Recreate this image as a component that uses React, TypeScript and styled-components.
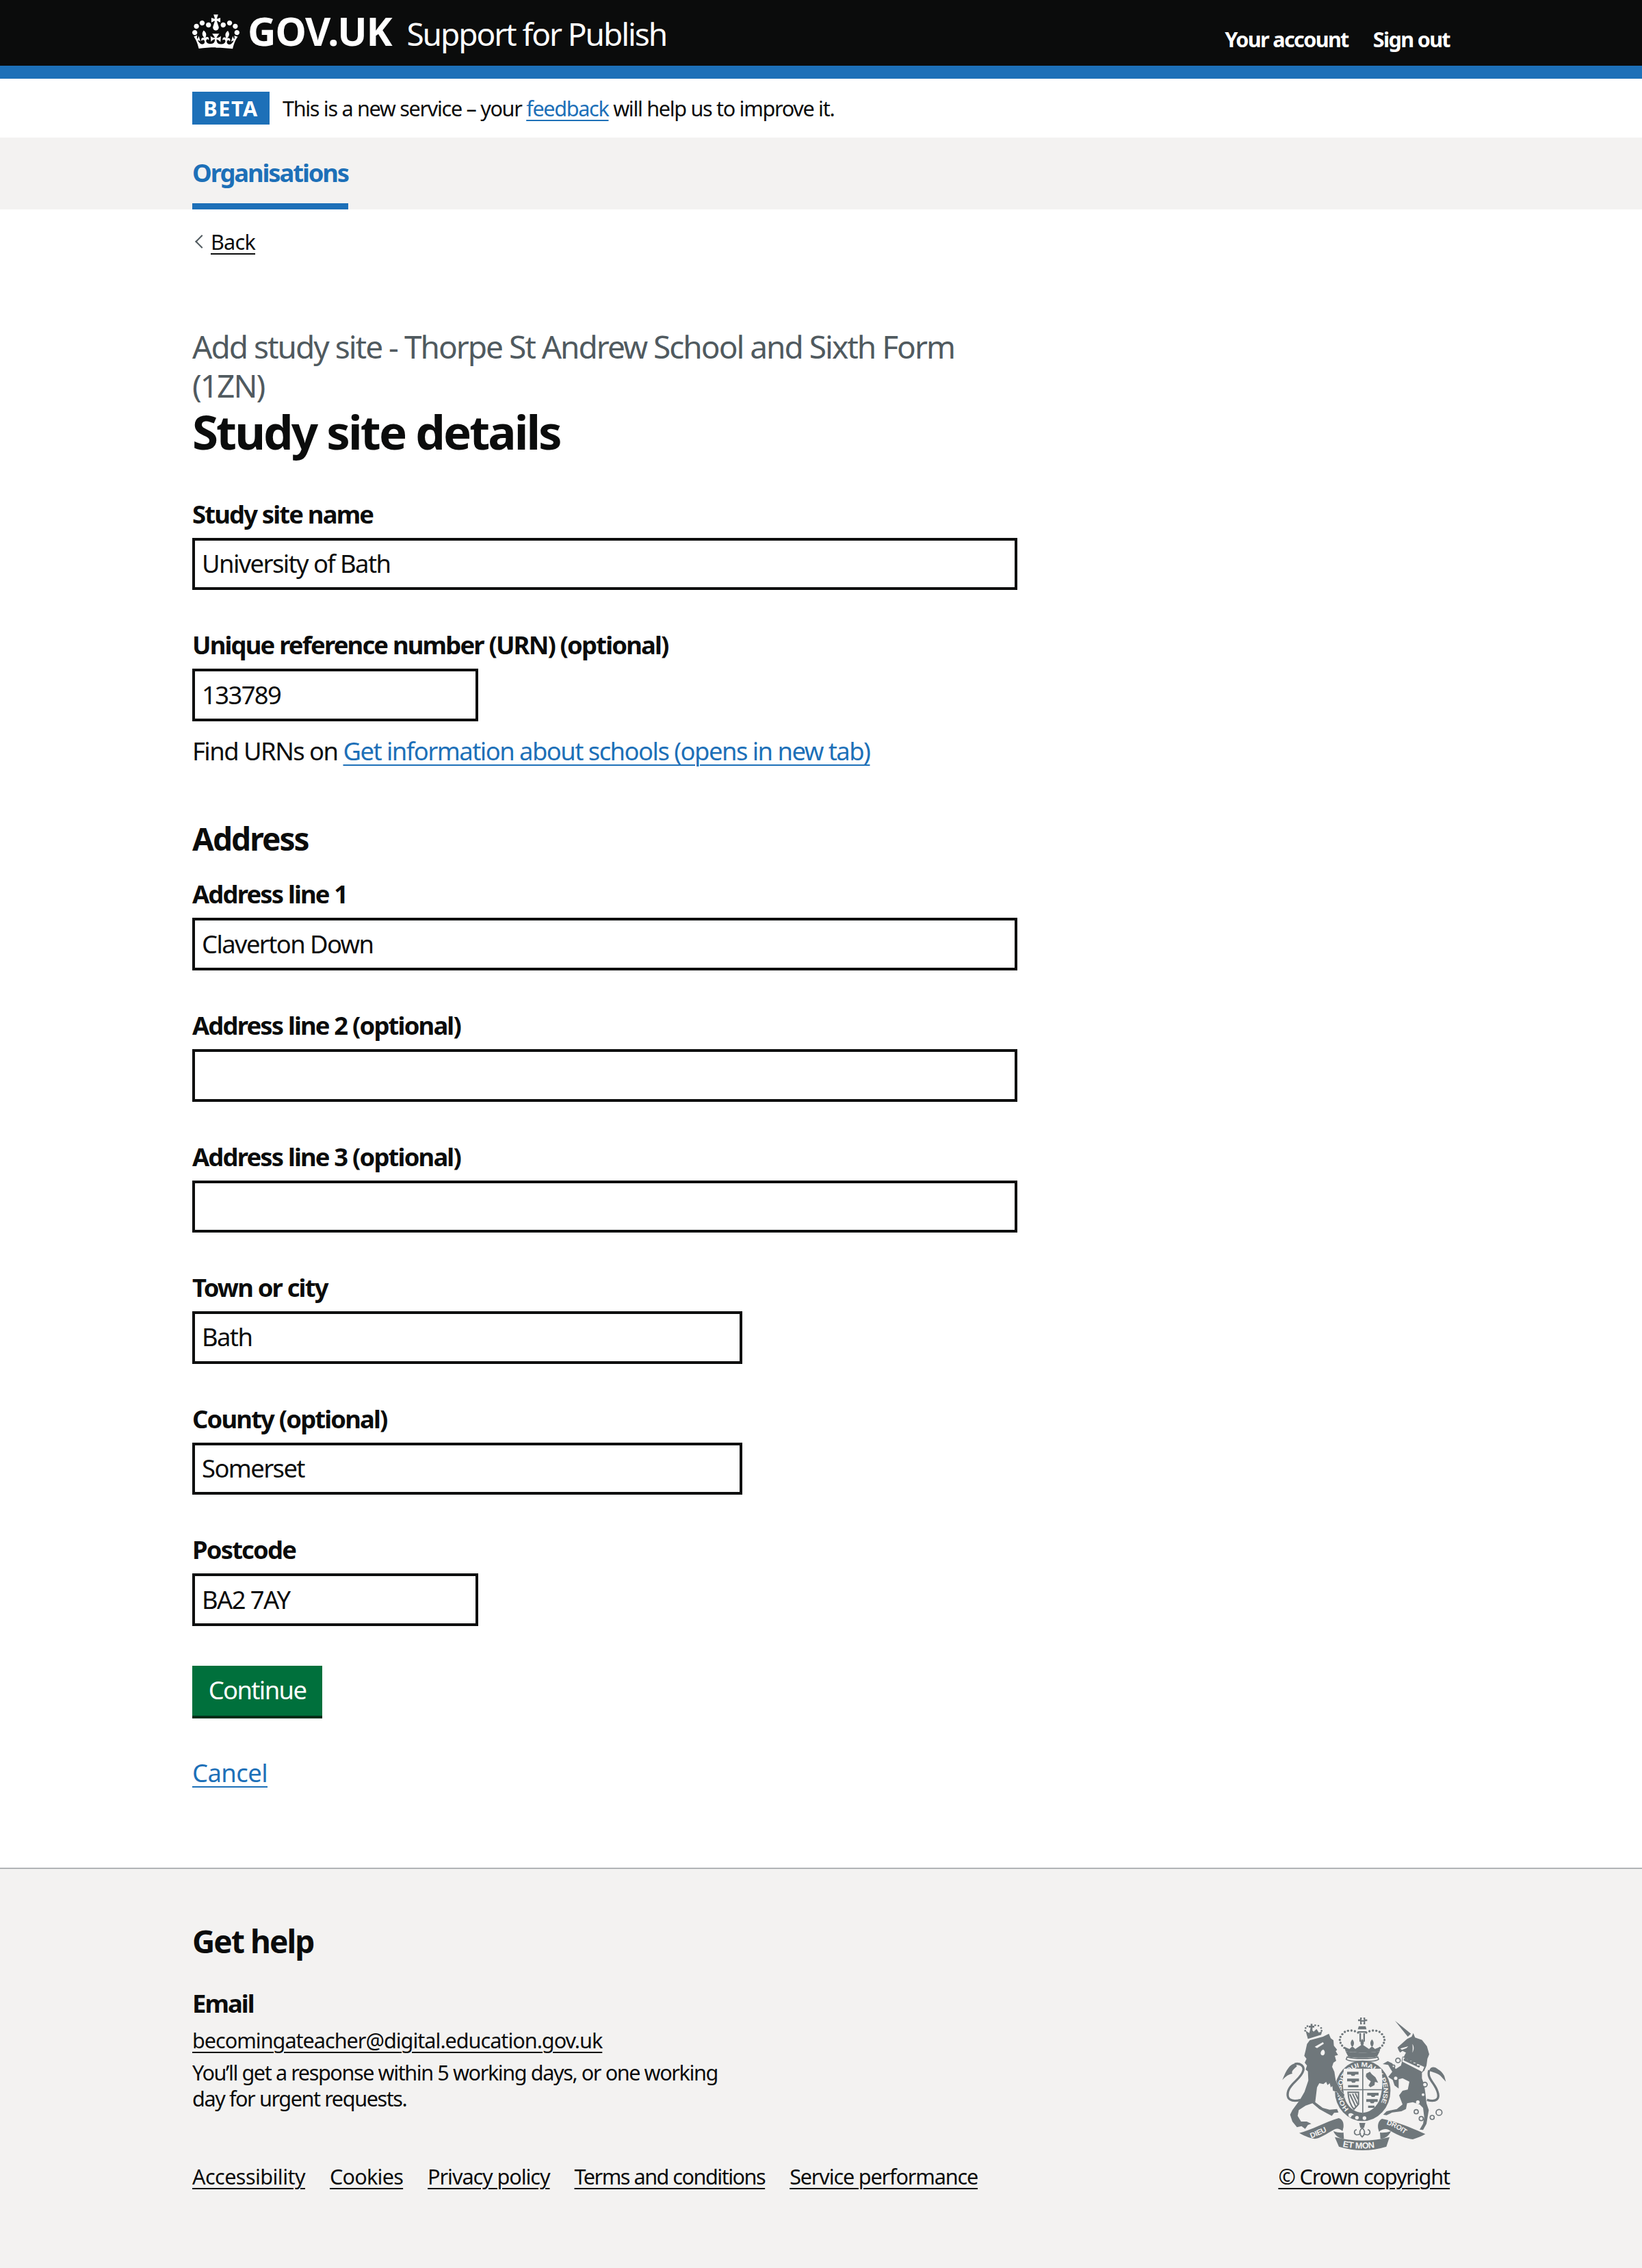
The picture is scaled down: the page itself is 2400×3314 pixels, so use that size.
import React from 'react';
import styled, { createGlobalStyle } from 'styled-components';

const FONT = '"Noto Sans", "Liberation Sans", Arial, sans-serif';
const INK = '#0b0c0c';
const BLUE = '#1d70b8';
const GREY = '#f3f2f1';

const GlobalStyle = createGlobalStyle`
  * {
    box-sizing: border-box;
  }
  html, body {
    margin: 0;
    padding: 0;
    background: #fff;
    color: ${INK};
    font-family: ${FONT};
  }
`;

const Container = styled.div`
  width: 1838px;
  margin: 0 auto;
`;

const HeaderBar = styled.header`
  height: 115px;
  background: ${INK};
  border-bottom: 19px solid ${BLUE};
`;

const HeaderInner = styled(Container)`
  height: 96px;
  display: flex;
  justify-content: space-between;
  align-items: center;
`;

const Logo = styled.div`
  display: flex;
  align-items: baseline;
  color: #fff;
  padding-bottom: 4px;
`;

const Crown = styled.svg`
  width: 69px;
  height: 51px;
  margin-right: 12px;
  align-self: center;
  fill: currentColor;
`;

const LogoText = styled.span`
  font-size: 57.4px;
  font-weight: 700;
  line-height: 1;
  letter-spacing: -0.02em;
`;

const ServiceName = styled.span`
  font-size: 46px;
  line-height: 1;
  margin-left: 22px;
  letter-spacing: -0.045em;
`;

const HeaderNav = styled.nav`
  display: flex;
  gap: 36px;
  padding-top: 17px;
`;

const HeaderLink = styled.a`
  color: #fff;
  font-size: 30.6px;
  font-weight: 700;
  line-height: 38px;
  letter-spacing: -0.054em;
  text-decoration: none;
`;

const BetaBanner = styled(Container)`
  height: 86px;
  display: flex;
  align-items: center;
  font-size: 30.6px;
  letter-spacing: -0.043em;
`;

const BetaTag = styled.strong`
  width: 113px;
  height: 48px;
  margin-right: 19px;
  display: flex;
  align-items: center;
  justify-content: center;
  background: ${BLUE};
  color: #fff;
  font-size: 30.6px;
  letter-spacing: 0.05em;
`;

const TextLink = styled.a`
  color: ${BLUE};
  text-decoration: underline;
  text-decoration-thickness: 2px;
  text-underline-offset: 0.1578em;
`;

const NavStrip = styled.div`
  height: 105px;
  background: ${GREY};
`;

const NavTab = styled.a`
  display: inline-block;
  height: 105px;
  padding-top: 27px;
  border-bottom: 9px solid ${BLUE};
  color: ${BLUE};
  font-size: 36.4px;
  font-weight: 700;
  line-height: 48px;
  letter-spacing: -0.058em;
  text-decoration: none;
`;

const BackRow = styled.div`
  display: flex;
  align-items: center;
  height: 38px;
  margin-top: 28px;
  font-size: 30.6px;
  letter-spacing: -0.025em;
`;

const Chevron = styled.span`
  width: 14px;
  height: 14px;
  margin: 0 6px 0 7px;
  border-top: 2px solid #505a5f;
  border-left: 2px solid #505a5f;
  transform: rotate(-45deg);
`;

const BlackLink = styled.a<{ $spacing?: number }>`
  color: ${INK};
  text-decoration: underline;
  text-decoration-thickness: 2px;
  text-underline-offset: 0.1578em;
  ${(p) => (p.$spacing !== undefined ? `letter-spacing: ${p.$spacing}em;` : '')}
`;

const Main = styled.main`
  width: 1206px;
  padding: 106px 0 115px;
`;

const Caption = styled.span`
  display: block;
  color: #505a5f;
  font-size: 46px;
  line-height: 57.4px;
  letter-spacing: -0.0435em;
`;

const Heading = styled.h1`
  margin: 0 0 60px;
  font-size: 69px;
  font-weight: 700;
  line-height: 74px;
  letter-spacing: -0.042em;
`;

const SubHeading = styled.h2`
  margin: 76px 0 28px;
  font-size: 46px;
  font-weight: 700;
  line-height: 57.4px;
  letter-spacing: -0.042em;
`;

const Field = styled.div`
  margin-bottom: 56px;
`;

const Label = styled.label`
  display: block;
  margin-bottom: 11px;
  font-size: 36.4px;
  font-weight: 700;
  line-height: 48px;
  letter-spacing: -0.05em;
`;

const TextInput = styled.input<{ $width: number }>`
  display: block;
  width: ${(p) => p.$width}px;
  height: 76.6px;
  padding: 10px 10px 12px;
  border: 4px solid ${INK};
  border-radius: 0;
  background: #fff;
  color: ${INK};
  font-family: ${FONT};
  font-size: 36.4px;
  letter-spacing: -0.044em;
  outline: none;
`;

const Hint = styled.p`
  margin: 19px 0 0;
  font-size: 36.4px;
  line-height: 48px;
  letter-spacing: -0.042em;
`;

const ContinueButton = styled.button`
  display: block;
  width: 190px;
  height: 77px;
  margin-top: 58px;
  padding: 0 0 2px;
  border: 0;
  border-bottom: 4px solid #002d18;
  border-radius: 0;
  background: #00703c;
  color: #fff;
  font-family: ${FONT};
  font-size: 36.4px;
  letter-spacing: -0.044em;
`;

const CancelRow = styled.div`
  margin-top: 55px;
  font-size: 36.4px;
  line-height: 48px;
  letter-spacing: -0.015em;
`;

const Footer = styled.footer`
  background: ${GREY};
  border-top: 2px solid #b1b4b6;
  padding: 77px 0 117px;
`;

const FooterInner = styled(Container)`
  display: flex;
  justify-content: space-between;
  align-items: flex-end;
`;

const FooterHeading = styled.h2`
  margin: 0 0 38px;
  font-size: 46px;
  font-weight: 700;
  line-height: 57.4px;
  letter-spacing: -0.042em;
`;

const FooterLabel = styled.h3`
  margin: 0 0 11px;
  font-size: 36.4px;
  font-weight: 700;
  line-height: 48px;
  letter-spacing: -0.053em;
`;

const SmallLine = styled.p<{ $gap?: number; $tight?: boolean }>`
  margin: 0 0 ${(p) => p.$gap ?? 0}px;
  width: 790px;
  font-size: 30.6px;
  line-height: 38px;
  letter-spacing: ${(p) => (p.$tight ? '-0.046em' : '-0.033em')};
`;

const FooterLinks = styled.div`
  display: flex;
  gap: 36px;
  margin-top: 76px;
  font-size: 30.6px;
  line-height: 38px;
`;

const CopyrightBlock = styled.div`
  display: flex;
  flex-direction: column;
  align-items: flex-end;
  font-size: 30.6px;
  line-height: 38px;
  letter-spacing: -0.037em;
`;

const CrestSvg = styled.svg`
  width: 255px;
  height: 210px;
  margin-right: -1px;
  margin-bottom: 11px;
  display: block;
`;

const CrestWord = styled.text`
  font-family: "Liberation Sans", Arial, sans-serif;
  font-weight: 700;
  fill: ${GREY};
`;

const CROWN_PATH =
  'M25 30.2c3.5 1.5 7.7-.2 9.1-3.7 1.5-3.6-.2-7.8-3.9-9.2-3.6-1.4-7.6.3-9.1 3.9-1.4 3.5.3 7.5 3.9 9zM9 39.5c3.6 1.5 7.8-.2 9.2-3.7 1.5-3.6-.2-7.8-3.9-9.1-3.6-1.5-7.6.2-9.1 3.8-1.4 3.5.3 7.5 3.8 9zM4.4 57.2c3.5 1.5 7.7-.2 9.1-3.8 1.5-3.6-.2-7.7-3.9-9.1-3.5-1.5-7.6.3-9.1 3.8-1.4 3.5.3 7.6 3.9 9.1zm38.3-21.4c3.5 1.5 7.7-.2 9.1-3.8 1.5-3.6-.2-7.7-3.9-9.1-3.6-1.5-7.6.3-9.1 3.8-1.3 3.6.4 7.7 3.9 9.1zm64.4-5.6c-3.6 1.5-7.8-.2-9.1-3.7-1.5-3.6.2-7.8 3.8-9.2 3.6-1.4 7.7.3 9.2 3.9 1.3 3.5-.4 7.5-3.9 9zm15.9 9.3c-3.6 1.5-7.7-.2-9.1-3.7-1.5-3.6.2-7.8 3.7-9.1 3.6-1.5 7.7.2 9.2 3.8 1.5 3.5-.3 7.5-3.8 9zm4.7 17.7c-3.6 1.5-7.8-.2-9.2-3.8-1.5-3.6.2-7.7 3.9-9.1 3.6-1.5 7.7.3 9.2 3.8 1.3 3.5-.4 7.6-3.9 9.1zM89.3 35.8c-3.6 1.5-7.8-.2-9.2-3.8-1.4-3.6.2-7.7 3.9-9.1 3.6-1.5 7.7.3 9.2 3.8 1.4 3.6-.3 7.7-3.9 9.1zM69.7 17.7l8.9 4.7V9.3l-8.9 2.8c-.2-.3-.5-.6-.9-.9L72.4 0H59.6l3.5 11.2c-.3.3-.6.5-.9.9l-8.8-2.8v13.1l8.8-4.7c.3.3.6.7.9.9l-5 15.4v.1c-.2.8-.4 1.6-.4 2.4 0 4.1 3.1 7.5 7 8.1h.2c.3 0 .7.1 1 .1.4 0 .7 0 1-.1h.2c4-.6 7.1-4.1 7.1-8.1 0-.8-.1-1.7-.4-2.4V34l-5.1-15.4c.4-.2.7-.6 1-.9zM66 92.8c16.9 0 32.8 1.1 47.1 3.2 4-16.9 8.9-26.7 14-33.5l-9.6-3.4c1 4.9 1.1 7.2 0 10.2-1.5-1.4-3-4.3-4.2-8.7L108.6 76c2.8-2 5-3.2 7.5-3.3-4.4 9.4-10 11.9-13.6 11.2-4.3-.8-6.3-4.6-5.6-7.9 1-4.7 5.7-5.9 8-.5 4.3-8.7-3-11.4-7.6-8.8 7.1-7.2 7.9-13.5 2.1-21.1-8 6.1-8.1 12.3-4.5 20.8-4.7-5.4-12.1-2.5-9.5 6.2 3.4-5.2 7.9-2 7.2 3.1-.6 4.3-6.4 7.8-13.5 7.2-10.3-.9-10.9-8-11.2-13 2.5-.5 7.1 1.8 11 7.3L80.2 60c-4.1 4.4-8 5.3-12.3 5.4 1.4-4.4 8-11.6 8-11.6H55.5s6.4 7.2 7.9 11.6c-4.2-.1-8-1-12.3-5.4l1.4 16.4c3.9-5.5 8.5-7.7 10.9-7.3-.3 5-.7 12.1-11 13-7.2.6-12.9-2.9-13.5-7.2-.7-5 3.8-8.3 7.1-3.1 2.7-8.7-4.6-11.6-9.4-6.2 3.7-8.5 3.6-14.7-4.6-20.8-5.8 7.6-5 13.9 2.2 21.1-4.7-2.6-11.9.1-7.7 8.8 2.3-5.5 7.1-4.2 8.1.5.7 3.3-1.3 7.1-5.7 7.9-3.5.7-9-1.8-13.5-11.2 2.5.1 4.7 1.3 7.5 3.3l-4.7-15.4c-1.2 4.4-2.7 7.2-4.3 8.7-1.1-3-.9-5.3 0-10.2l-9.5 3.4c5 6.9 9.9 16.7 14 33.5 14.8-2.1 30.8-3.2 47.7-3.2z';

const CREST = '#6f777b';

const Beads = ({ items, r = 5 }: { items: number[][]; r?: number }) => (
  <g fill={CREST}>
    {items.map(([cx, cy], i) => (
      <circle key={i} cx={cx} cy={cy} r={r} />
    ))}
  </g>
);

const Rings = ({ items }: { items: number[][] }) => (
  <g fill={GREY} stroke={CREST} strokeWidth={5}>
    {items.map(([cx, cy, r], i) => (
      <circle key={i} cx={cx} cy={cy} r={r} />
    ))}
  </g>
);

// traced by eye from the royal coat of arms, units are 1/3 of a page pixel
const RoyalCrest = () => (
  <CrestSvg viewBox="0 0 765 630" aria-hidden="true">
    <defs>
      <path id="garter-arc" d="M320,425 A92,105 0 1 1 440,425" />
      <path id="dieu-arc" d="M155,553 Q205,535 262,502" />
      <path id="droit-arc" d="M484,492 Q535,508 590,556" />
      <path id="mon-arc" d="M292,590 Q380,608 468,588" />
      <clipPath id="shield-clip">
        <path d="M298,248 H462 C470,300 468,350 452,390 C435,425 405,440 380,442 C352,440 322,425 306,390 C292,350 290,300 298,248 Z" />
      </clipPath>
    </defs>

    {/* crown */}
    <g fill={CREST}>
      <path d="M369,24 h8 l-2,12 h10 l-2,-12 h8 v30 h-8 l2,-12 h-10 l2,12 h-8 Z M360,32 h12 v8 h-12 Z M388,32 h12 v8 h-12 Z" />
      <path d="M363,62 h30 l4,14 h-38 Z" />
      <rect x="366" y="92" width="7" height="38" />
      <rect x="383" y="92" width="7" height="38" />
      <rect x="360" y="84" width="36" height="6" />
      <path d="M305,172 C335,180 425,180 455,172 L443,196 C420,202 340,202 317,196 Z" />
      <path d="M300,152 L322,162 L335,150 L348,162 L378,142 L408,162 L421,150 L434,162 L458,152 L455,172 C425,180 335,180 305,172 Z" />
      <path d="M335,120 c9,10 9,20 3,30 h-6 c-6,-10 -6,-20 3,-30 Z M421,120 c9,10 9,20 3,30 h-6 c-6,-10 -6,-20 3,-30 Z M378,118 c9,10 9,20 3,30 h-6 c-6,-10 -6,-20 3,-30 Z" />
    </g>
    <Beads items={[[360, 90], [346, 84], [331, 81], [316, 82], [302, 87], [291, 97], [283, 109], [280, 122], [283, 135], [290, 147], [300, 157]]} />
    <Beads items={[[396, 90], [410, 84], [425, 81], [440, 82], [454, 87], [465, 97], [473, 109], [476, 122], [473, 135], [466, 147], [456, 157]]} />
    <path d="M312,197 C340,206 420,206 446,197 L450,207 C440,220 320,220 308,207 Z" fill={GREY} stroke={CREST} strokeWidth={5} />

    {/* garter and shield */}
    <ellipse cx="380" cy="345" rx="122" ry="133" fill={CREST} />
    <path d="M298,248 H462 C470,300 468,350 452,390 C435,425 405,440 380,442 C352,440 322,425 306,390 C292,350 290,300 298,248 Z" fill={GREY} />
    <CrestWord fontSize="28">
      <textPath href="#garter-arc" textLength="450" lengthAdjust="spacingAndGlyphs">
        HONI SOIT QUI MAL Y PENSE
      </textPath>
    </CrestWord>
    <g clipPath="url(#shield-clip)">
      <path d="M378,248 h5 v194 h-5 Z M290,338 h180 v5 h-180 Z" fill={CREST} />
      <g fill={CREST}>
        <path d="M312,262 h50 v12 h-14 l-4,6 h-12 l-4,-6 h-16 Z M312,292 h52 v12 h-14 l-4,6 h-12 l-4,-6 h-18 Z M316,320 h46 v10 h-46 Z" />
        <path d="M396,270 l16,-8 l8,10 l16,14 l12,24 l-14,-4 l-2,14 l-18,10 l-8,-8 l10,-18 l-14,-10 l-8,-12 Z" />
        <path d="M400,354 h50 v12 h-14 l-4,6 h-12 l-4,-6 h-16 Z M396,382 h50 v12 h-14 l-4,6 h-12 l-4,-6 h-16 Z M404,410 h28 v10 h-28 Z" />
      </g>
      <path d="M316,352 L362,352 L362,404 L342,426 C328,410 318,385 316,352 Z" fill="none" stroke={CREST} strokeWidth={6} />
      <path d="M324,360 L350,415 M336,358 L358,404 M348,356 L360,382" fill="none" stroke={CREST} strokeWidth={6} />
    </g>
    <g fill={GREY}>
      <circle cx="388" cy="465" r="8" />
      <circle cx="355" cy="463" r="8" />
      <path d="M318,447 c8,-6 18,-4 24,4 c-6,0 -12,4 -14,12 c-8,-2 -12,-8 -10,-16 Z" />
    </g>

    {/* lion */}
    <g fill={CREST} stroke={GREY} strokeWidth={3} paintOrder="stroke">
      <path d="M130,168 L136,140 L148,124 L206,108 L232,95 L240,115 L252,124 L254,148 L268,165 L262,172 L272,188 L258,192 L264,214 L252,222 L246,240 L256,262 L262,300 L285,345 L300,362 L296,380 L280,368 L268,350 L250,345 L247,325 L240,330 L236,312 L226,320 L220,306 L208,316 L190,312 L180,330 L172,395 L205,420 L235,428 L268,425 L274,440 L255,442 L245,455 L225,445 L190,425 L160,400 L130,410 L100,430 L95,455 L110,480 L135,480 L155,490 L140,495 L128,512 L112,500 L92,505 L72,480 L62,450 L72,430 L105,385 L125,350 L142,300 L140,260 L130,252 L136,235 L126,222 L134,205 L124,192 Z" />
    </g>
    <path d="M85,225 C60,228 45,255 28,298 C48,278 52,275 72,270 C65,262 78,250 92,238 Z" fill={CREST} />
    <path d="M108,385 C70,395 42,385 54,345 C65,310 112,292 120,255 C124,236 105,222 82,228" fill="none" stroke={CREST} strokeWidth={10} />
    <path d="M170,152 L206,132 L210,139 L180,158 Z M207,164 C218,170 216,190 204,190 C192,188 194,170 207,164 Z" fill={GREY} />
    <path d="M140,118 L198,100 L202,84 L188,90 L178,74 L165,86 L152,70 L146,92 L130,82 Z" fill={CREST} />
    <path d="M152,52 h8 v8 h8 v8 h-8 v10 h-8 v-10 h-8 v-8 h8 Z" fill={CREST} />
    <Beads r={4} items={[[128, 82], [130, 70], [138, 62], [172, 58], [186, 60], [198, 70], [200, 82]]} />

    {/* unicorn */}
    <g fill={CREST} stroke={GREY} strokeWidth={3} paintOrder="stroke">
      <path d="M533,155 L575,118 L595,108 L602,92 L610,112 L640,122 L662,150 L672,185 L664,205 L660,235 L650,258 L640,262 L640,290 L650,320 L655,355 L660,400 L670,430 L665,460 L660,490 L645,517 L630,515 L645,490 L650,460 L645,420 L630,405 L600,395 L575,400 L570,425 L550,435 L510,440 L485,452 L470,450 L485,435 L530,425 L555,405 L540,365 L555,345 L578,340 L585,305 L555,290 L538,295 L538,335 L520,322 L512,298 L492,284 L510,262 L492,232 L468,228 L490,215 L510,225 L525,250 L548,235 L556,205 L570,178 L555,170 L544,178 L538,168 Z" />
    </g>
    <path d="M522,38 L592,95 L578,108 Z" fill={CREST} />
    <path d="M712,252 C695,238 680,238 672,255 C676,264 700,262 720,278 L745,305 L738,280 C730,265 722,258 712,252 Z" fill={CREST} />
    <path d="M662,385 C700,395 722,385 707,345 C695,310 660,290 672,255" fill="none" stroke={CREST} strokeWidth={10} />
    <path d="M556,196 L652,240 L642,264 L552,218 Z" fill={GREY} stroke={CREST} strokeWidth={3} />
    <path d="M560,206 l10,-8 l6,10 l12,-3 l2,11 l14,-1 l0,10 l16,-1 l-2,11 l14,-1 l-4,10 l-68,-32 Z" fill={CREST} />
    <path d="M545,160 L580,150 L572,158 L552,166 Z M598,140 C606,150 606,165 598,178 C600,165 600,152 598,140 Z" fill={GREY} />
    <g fill={GREY}>
      <circle cx="622" cy="395" r="8" />
      <circle cx="645" cy="362" r="6" />
    </g>
    <Rings items={[[535, 212, 10], [515, 238, 6], [525, 290, 10], [653, 318, 10], [615, 437, 9], [637, 467, 9], [685, 462, 9], [715, 440, 13]]} />

    {/* motto ribbon */}
    <g fill={CREST}>
      <path d="M102,530 C150,520 220,480 275,465 C292,470 298,485 296,505 L292,522 C280,512 270,508 258,514 C220,535 190,555 170,556 C140,550 120,540 102,530 Z" />
      <path d="M655,535 C600,510 530,480 465,468 C452,475 445,490 448,510 L452,525 C462,515 480,510 492,515 C530,540 570,555 600,558 C620,552 640,545 655,535 Z" />
      <path d="M258,548 Q380,578 498,548 L484,590 Q380,622 276,590 Z" />
      <path d="M252,522 C258,540 278,556 298,556 L296,528 C284,530 268,528 252,522 Z" />
      <path d="M504,522 C498,540 478,556 458,556 L456,528 C470,530 488,528 504,522 Z" />
      <path d="M365,486 H392 L386,508 H370 Z" />
    </g>
    <g fill="none" stroke={CREST} strokeWidth={5}>
      <path d="M378,508 c14,12 14,26 0,40 c-14,-14 -14,-28 0,-40 Z" />
      <path d="M354,516 c-12,0 -14,18 -2,22 c8,2 14,-2 20,-6 M402,516 c12,0 14,18 2,22 c-8,2 -14,-2 -20,-6" />
    </g>
    <CrestWord fontSize="33">
      <textPath href="#dieu-arc">DIEU</textPath>
    </CrestWord>
    <CrestWord fontSize="31">
      <textPath href="#droit-arc">DROIT</textPath>
    </CrestWord>
    <CrestWord fontSize="38">
      <textPath href="#mon-arc">ET MON</textPath>
    </CrestWord>
  </CrestSvg>
);

const FULL = 1206;
const TWO_THIRDS = 804;
const SHORT = 418;

const App = () => (
  <>
    <GlobalStyle />
    <HeaderBar>
      <HeaderInner>
        <Logo>
          <Crown viewBox="0 0 132 97" aria-hidden="true">
            <path fillRule="evenodd" d={CROWN_PATH} />
          </Crown>
          <LogoText>GOV.UK</LogoText>
          <ServiceName>Support for Publish</ServiceName>
        </Logo>
        <HeaderNav>
          <HeaderLink href="#">Your account</HeaderLink>
          <HeaderLink href="#">Sign out</HeaderLink>
        </HeaderNav>
      </HeaderInner>
    </HeaderBar>

    <BetaBanner>
      <BetaTag>BETA</BetaTag>
      <span>
        This is a new service – your <TextLink href="#">feedback</TextLink> will help us to improve it.
      </span>
    </BetaBanner>

    <NavStrip>
      <Container>
        <NavTab href="#">Organisations</NavTab>
      </Container>
    </NavStrip>

    <Container>
      <BackRow>
        <Chevron />
        <BlackLink href="#">Back</BlackLink>
      </BackRow>
      <Main>
        <Caption>Add study site - Thorpe St Andrew School and Sixth Form (1ZN)</Caption>
        <Heading>Study site details</Heading>

        <Field>
          <Label>Study site name</Label>
          <TextInput $width={FULL} defaultValue="University of Bath" />
        </Field>

        <Field>
          <Label>Unique reference number (URN) (optional)</Label>
          <TextInput $width={SHORT} defaultValue="133789" />
          <Hint>
            Find URNs on <TextLink href="#">Get information about schools (opens in new tab)</TextLink>
          </Hint>
        </Field>

        <SubHeading>Address</SubHeading>

        <Field>
          <Label>Address line 1</Label>
          <TextInput $width={FULL} defaultValue="Claverton Down" />
        </Field>
        <Field>
          <Label>Address line 2 (optional)</Label>
          <TextInput $width={FULL} />
        </Field>
        <Field>
          <Label>Address line 3 (optional)</Label>
          <TextInput $width={FULL} />
        </Field>
        <Field>
          <Label>Town or city</Label>
          <TextInput $width={TWO_THIRDS} defaultValue="Bath" />
        </Field>
        <Field>
          <Label>County (optional)</Label>
          <TextInput $width={TWO_THIRDS} defaultValue="Somerset" />
        </Field>
        <Field>
          <Label>Postcode</Label>
          <TextInput $width={SHORT} defaultValue="BA2 7AY" />
        </Field>

        <ContinueButton type="button">Continue</ContinueButton>
        <CancelRow>
          <TextLink href="#">Cancel</TextLink>
        </CancelRow>
      </Main>
    </Container>

    <Footer>
      <FooterInner>
        <div>
          <FooterHeading>Get help</FooterHeading>
          <FooterLabel>Email</FooterLabel>
          <SmallLine $gap={9}>
            <BlackLink href="#">becomingateacher@digital.education.gov.uk</BlackLink>
          </SmallLine>
          <SmallLine $tight>You’ll get a response within 5 working days, or one working day for urgent requests.</SmallLine>
          <FooterLinks>
            <BlackLink href="#" $spacing={-0.019}>Accessibility</BlackLink>
            <BlackLink href="#" $spacing={-0.025}>Cookies</BlackLink>
            <BlackLink href="#" $spacing={-0.035}>Privacy policy</BlackLink>
            <BlackLink href="#" $spacing={-0.049}>Terms and conditions</BlackLink>
            <BlackLink href="#" $spacing={-0.038}>Service performance</BlackLink>
          </FooterLinks>
        </div>
        <CopyrightBlock>
          <RoyalCrest />
          <BlackLink href="#">© Crown copyright</BlackLink>
        </CopyrightBlock>
      </FooterInner>
    </Footer>
  </>
);

export default App;
